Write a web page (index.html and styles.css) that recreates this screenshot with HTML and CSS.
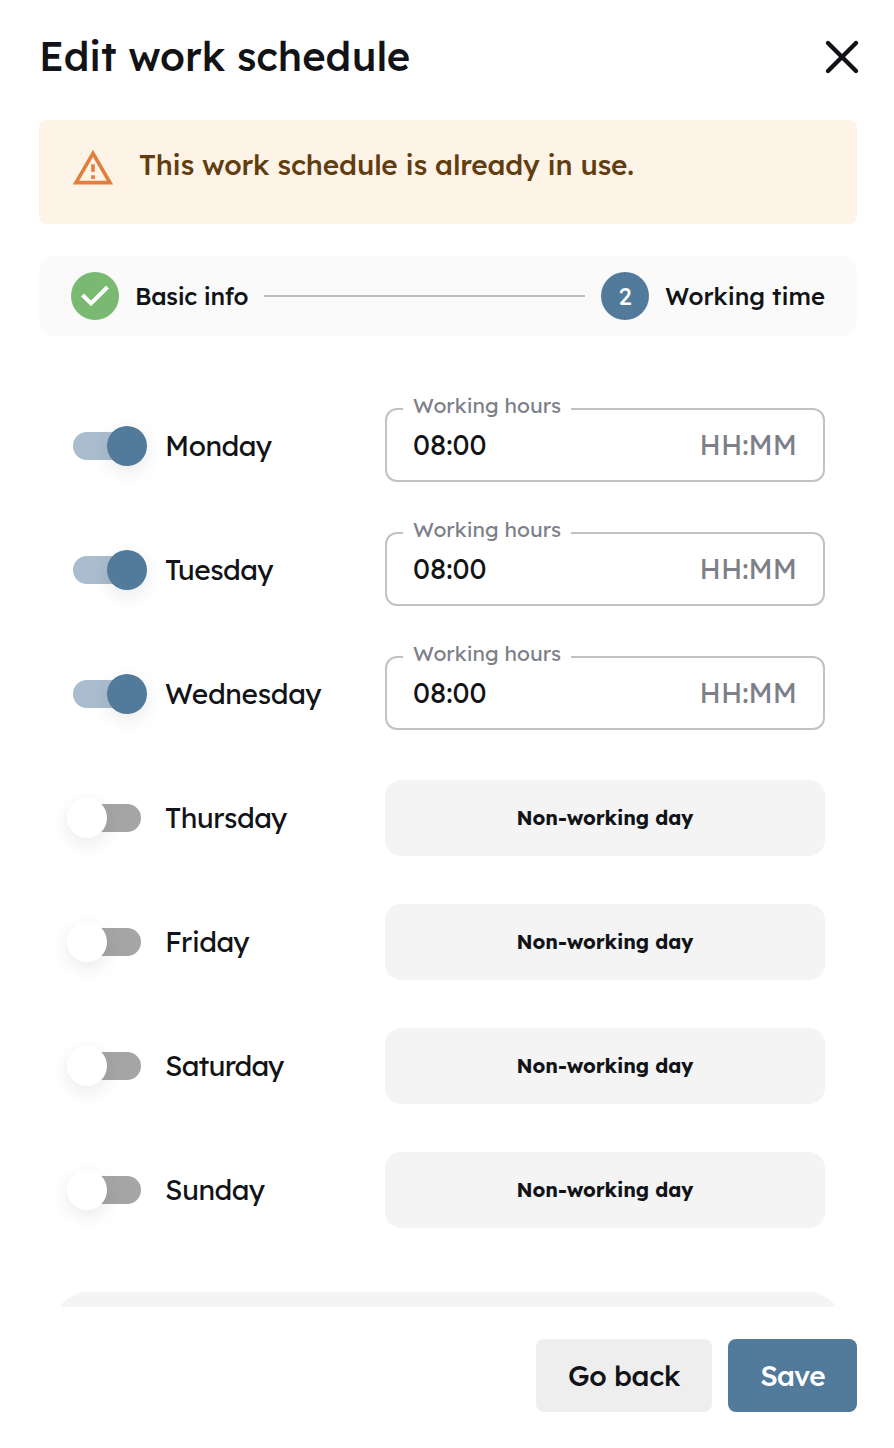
FILE: index.html
```html
<!DOCTYPE html>
<html lang="en">
<head>
  <meta charset="UTF-8">
  <meta name="viewport" content="width=device-width, initial-scale=1.0">
  <title>Edit work schedule</title>
  <link rel="stylesheet" href="styles.css">
</head>
<body>
  <div class="dialog">
    <div class="header">
      <h1>Edit work schedule</h1>
      <button class="close" aria-label="Close">
        <svg width="36" height="36" viewBox="0 0 36 36" fill="none" stroke="#111317" stroke-width="4.4" stroke-linecap="round"><path d="M4 4l28 28M32 4L4 32"/></svg>
      </button>
    </div>

    <!-- Scrollable content -->
    <div class="content">
      <div class="alert">
        <svg class="alert-icon" width="44" height="44" viewBox="0 0 24 24" fill="#e17f3e"><path d="M12 5.99L19.53 19H4.47L12 5.99M12 2L1 21h22L12 2z"/><path d="M11 16h2v2h-2zM11 10h2v4h-2z"/></svg>
        <span>This work schedule is already in use.</span>
      </div>

      <div class="stepper">
        <span class="step-icon done">
          <svg width="48" height="48" viewBox="0 0 48 48" fill="none" stroke="#fff" stroke-width="4"><path d="M11.5 23l8.500 8.500L36.500 15"/></svg>
        </span>
        <span class="step-label completed">Basic info</span>
        <span class="step-line"></span>
        <span class="step-icon active">2</span>
        <span class="step-label">Working time</span>
      </div>

      <!-- Days -->
      <div class="days">
        <div class="day">
          <span class="switch on"></span>
          <span class="day-name">Monday</span>
          <fieldset class="hours"><legend>Working hours</legend><div class="hours-row"><span>08:00</span><span class="unit">HH:MM</span></div></fieldset>
        </div>
        <div class="day">
          <span class="switch on"></span>
          <span class="day-name">Tuesday</span>
          <fieldset class="hours"><legend>Working hours</legend><div class="hours-row"><span>08:00</span><span class="unit">HH:MM</span></div></fieldset>
        </div>
        <div class="day">
          <span class="switch on"></span>
          <span class="day-name wednesday">Wednesday</span>
          <fieldset class="hours"><legend>Working hours</legend><div class="hours-row"><span>08:00</span><span class="unit">HH:MM</span></div></fieldset>
        </div>
        <div class="day">
          <span class="switch"></span>
          <span class="day-name">Thursday</span>
          <div class="non-working">Non-working day</div>
        </div>
        <div class="day">
          <span class="switch"></span>
          <span class="day-name">Friday</span>
          <div class="non-working">Non-working day</div>
        </div>
        <div class="day">
          <span class="switch"></span>
          <span class="day-name saturday">Saturday</span>
          <div class="non-working">Non-working day</div>
        </div>
        <div class="day">
          <span class="switch"></span>
          <span class="day-name">Sunday</span>
          <div class="non-working">Non-working day</div>
        </div>
      </div>

      <div class="summary"></div>
    </div>

    <div class="footer">
      <button class="back">Go back</button>
      <button class="save">Save</button>
    </div>
  </div>
</body>
</html>
```
FILE: styles.css
```css
* {
  box-sizing: border-box;
}
body {
  margin: 0;
  background-color: #fff;
  color: #111317;
  font-family: Lexend, Inter, sans-serif;
}
button {
  border: none;
  font-family: inherit;
  cursor: pointer;
}
.dialog {
  display: flex;
  flex-direction: column;
  height: 1448px;
  overflow: hidden;
}
.header {
  display: flex;
  justify-content: space-between;
  align-items: center;
  height: 120px;
  padding: 0 34px 6px 39px;
}
h1 {
  margin: 0;
  padding-bottom: 2px;
  font-size: 40px;
  font-weight: 500;
  line-height: 50px;
  letter-spacing: -0.05px;
}
.close {
  display: flex;
  padding: 0;
  background: none;
}
.content {
  height: 1187px;
  padding: 0 37px 0 39px;
  overflow: hidden;
}
.alert {
  display: flex;
  gap: 24px;
  height: 104px;
  padding: 25px 32px;
  border-radius: 8px;
  background-color: #fdf4e7;
  color: #613d10;
  font-size: 28px;
  font-weight: 500;
  line-height: 40px;
  letter-spacing: -0.18px;
}
.alert-icon {
  margin-top: 1px;
}
.stepper {
  display: flex;
  align-items: center;
  height: 80px;
  margin-top: 32px;
  padding: 0 32px;
  border-radius: 16px;
  background-color: #fafafa;
  font-size: 24px;
  font-weight: 500;
}
.step-icon {
  display: flex;
  flex: none;
  align-items: center;
  justify-content: center;
  width: 48px;
  height: 48px;
  border-radius: 50%;
  color: #fff;
  font-size: 24px;
  font-weight: 400;
}
.done {
  background-color: #7ab971;
}
.active {
  background-color: #527a9b;
}
.step-label {
  margin-left: 16px;
  white-space: nowrap;
}
.completed {
  letter-spacing: -0.3px;
}
.step-line {
  flex: 1;
  height: 2px;
  margin: 0 16px;
  background-color: #bdbdbd;
}
.days {
  display: flex;
  flex-direction: column;
  gap: 48px;
  margin-top: 72px;
  padding: 0 32px 0 34px;
}
.day {
  display: flex;
  align-items: center;
  height: 76px;
}
.switch {
  position: relative;
  width: 68px;
  height: 28px;
  border-radius: 14px;
  background-color: #a5a5a5;
}
.switch::after {
  content: "";
  position: absolute;
  top: -6px;
  left: -6px;
  width: 40px;
  height: 40px;
  border-radius: 50%;
  background-color: #fff;
  box-shadow: 0 6px 20px rgba(0, 0, 0, 0.09);
}
.switch.on {
  background-color: #a9bdce;
}
.switch.on::after {
  left: 34px;
  background-color: #527a9b;
}
.day-name {
  flex: 1;
  margin-left: 24px;
  padding-bottom: 1px;
  font-size: 28px;
  letter-spacing: -0.5px;
}
.wednesday {
  letter-spacing: -0.35px;
}
.saturday {
  letter-spacing: -0.8px;
}
.hours {
  align-self: flex-start;
  width: 440px;
  height: 85px;
  margin: -11px 0 0;
  padding: 0 16px;
  border: 2px solid #c2c2c2;
  border-radius: 12px;
}
.hours legend {
  width: 168px;
  height: 24px;
  padding: 0 10px;
  color: #7d8088;
  font-size: 21px;
  line-height: 16px;
  white-space: nowrap;
}
.hours-row {
  display: flex;
  justify-content: space-between;
  padding: 4px 10px;
  font-size: 28px;
  line-height: 40px;
}
.unit {
  color: #7d8088;
}
.non-working {
  display: flex;
  align-items: center;
  justify-content: center;
  width: 440px;
  height: 76px;
  padding-bottom: 2px;
  border-radius: 16px;
  background-color: #f4f4f4;
  font-size: 20px;
  font-weight: 700;
  letter-spacing: -0.13px;
}
.summary {
  height: 160px;
  margin: 64px 16px 0;
  border-radius: 32px;
  background-color: #f4f4f4;
}
.footer {
  display: flex;
  justify-content: flex-end;
  gap: 16px;
  padding: 32px 37px 36px;
}
.footer button {
  height: 73px;
  padding: 0;
  border-radius: 8px;
  font-size: 28px;
  font-weight: 500;
}
.footer .back {
  width: 176px;
  background-color: #eee;
  color: #111317;
  letter-spacing: -0.4px;
}
.footer .save {
  width: 129px;
  background-color: #527a9b;
  color: #fff;
  letter-spacing: -0.7px;
}
```
